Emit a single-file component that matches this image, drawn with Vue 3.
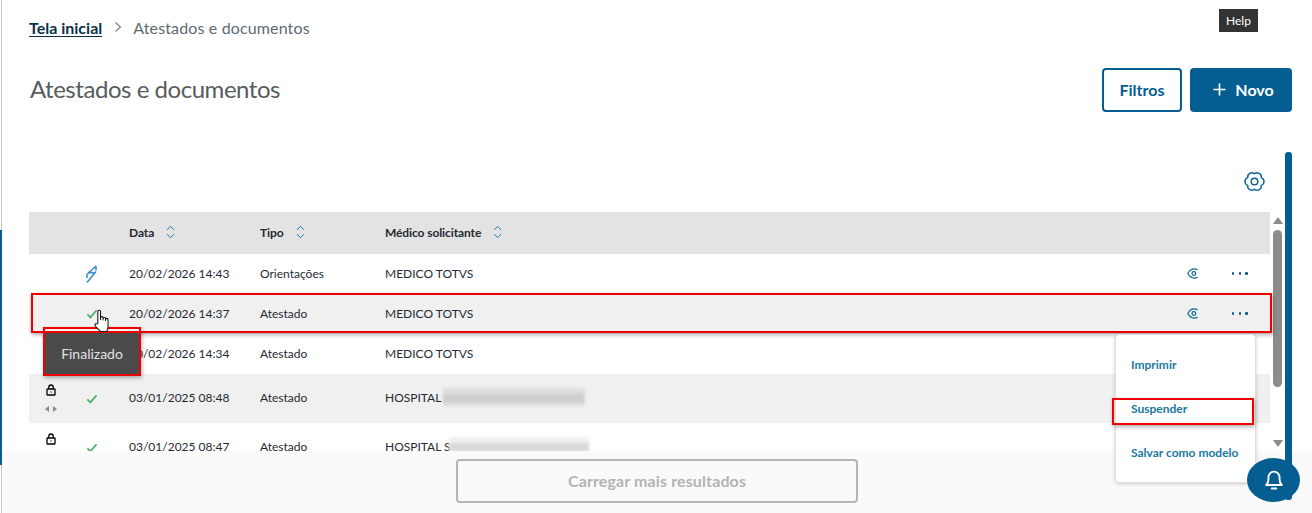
<script setup>
const rows = [
  { status: 'progress', date: '20/02/2026 14:43', type: 'Orientações', doctor: 'MEDICO TOTVS', eye: true, more: true, cls: '' },
  { status: 'done', date: '20/02/2026 14:37', type: 'Atestado', doctor: 'MEDICO TOTVS', eye: true, more: true, cls: 'alt' },
  { status: '', date: '20/02/2026 14:34', type: 'Atestado', doctor: 'MEDICO TOTVS', cls: '' },
  { status: 'done', date: '03/01/2025 08:48', type: 'Atestado', doctor: 'HOSPITAL', lock: true, arrows: true, blur: 'b1', cls: 'alt tall' },
  { status: 'done', date: '03/01/2025 08:47', type: 'Atestado', doctor: 'HOSPITAL S', lock: true, blur: 'b2', cls: 'tall' }
]
const heads = ['Data', 'Tipo', 'Médico solicitante']
</script>

<template>
  <div class="page">
    <div class="rail"></div>
    <nav class="crumbs">
      <a class="crumb-link">Tela inicial</a>
      <svg class="crumb-sep" viewBox="0 0 8 12" width="8" height="12"><path d="M1.5 1.5 6.5 6l-5 4.5" fill="none" stroke="#7a7a7a" stroke-width="1.1"/></svg>
      <span class="crumb-now">Atestados e documentos</span>
    </nav>
    <header class="head">
      <h1>Atestados e documentos</h1>
      <div class="actions">
        <button class="btn outline">Filtros</button>
        <button class="btn solid">
          <svg viewBox="0 0 14 14" width="13" height="13"><path d="M7 0.5v13M0.5 7h13" stroke="#fff" stroke-width="1.8"/></svg>
          Novo
        </button>
      </div>
    </header>
    <div class="gear-row">
      <svg class="gear" viewBox="0 0 24 24" width="25" height="25" fill="none" stroke="#0b6496" stroke-width="1.4" stroke-linejoin="round">
        <path d="M12 4.5A4 4 0 0 1 18.5 8.25 4 4 0 0 1 18.5 15.75 4 4 0 0 1 12 19.5 4 4 0 0 1 5.5 15.75 4 4 0 0 1 5.500 8.250 4 4 0 0 1 12 4.500Z"/>
        <circle cx="12" cy="12" r="3.2"/>
      </svg>
    </div>
    <div class="table">
      <div class="row thead">
        <span></span><span></span>
        <span v-for="h in heads" :key="h" class="th">
          {{ h }}
          <svg viewBox="0 0 10 16" width="9" height="14" fill="none" stroke="#1b6f9c" stroke-width="1.1"><path d="M1 5.5 5 1.5l4 4M1 10.5l4 4 4-4"/></svg>
        </span>
        <span></span><span></span>
      </div>
      <div v-for="r in rows" :key="r.date" class="row" :class="r.cls">
        <span class="lockcell">
          <svg v-if="r.lock" viewBox="0 0 10 12" width="10" height="12" fill="none" stroke="#000" stroke-width="1.3"><path d="M2.800 5V3.200a2.200 2.200 0 0 1 4.400 0V5"/><rect x="1" y="5" width="8" height="6" rx=".6"/><path d="M5 7.500v1"/></svg>
          <svg v-if="r.arrows" class="arrows" viewBox="0 0 12 6" width="12" height="6" fill="#8a8a8a"><path d="M4 0v6L0 3zM8 0v6l4-3z"/></svg>
        </span>
        <span class="status">
          <svg v-if="r.status === 'done'" viewBox="0 0 14 12" width="12" height="10" fill="none" stroke="#4fae6a" stroke-width="2.200"><path d="M1.500 6.500 5 10 12.500 1.500"/></svg>
          <svg v-else-if="r.status === 'progress'" viewBox="0 0 11 18" width="11" height="18" fill="none" stroke="#3a8fd0" stroke-width="1.600" stroke-linejoin="bevel"><path d="M10 1 1 9.500V13M10 1v4.500M10 6.500 1 17.500M2 7.500l7.500 .2"/></svg>
        </span>
        <span>{{ r.date }}</span>
        <span>{{ r.type }}</span>
        <span class="doctor">{{ r.doctor }}<i v-if="r.blur" class="smudge" :class="r.blur"></i></span>
        <span class="eye">
          <svg v-if="r.eye" viewBox="0 0 14 12" width="12" height="11" fill="none" stroke="#0b6496" stroke-width="1.400"><path d="M12.500 1.700C8 -.2 3.500 1.200 1 6c2.500 4.800 7 6.200 11.500 4.300"/><circle cx="8" cy="6" r="2.200"/></svg>
        </span>
        <span class="more"><template v-if="r.more"><b></b><b></b><b></b></template></span>
      </div>
    </div>
    <footer class="foot">
      <button class="load" disabled>Carregar mais resultados</button>
    </footer>

    <div class="vscroll"></div>
    <div class="tscroll">
      <i class="up"></i><i class="thumb"></i><i class="down"></i>
    </div>

    <div class="help">Help</div>
    <div class="mark mark-row"></div>
    <div class="tip">Finalizado</div>
    <div class="mark mark-tip"></div>
    <svg class="hand" viewBox="0 0 16 24" width="18" height="25" fill="#fff" stroke="#111" stroke-width="1" stroke-linejoin="round">
      <path d="M4 14V2.500a1.300 1.300 0 0 1 2.600 0V10V8.500a1.200 1.200 0 0 1 2.400 0V10.500V9.300a1.200 1.200 0 0 1 2.400 0V11V10.200a1.200 1.200 0 0 1 2.400 0V17c0 2-.6 3-1.200 4.500H6.500L2 17c-1.300-1.500-.8-3 .5-2.700z"/>
    </svg>
    <div class="menu">
      <a>Imprimir</a>
      <a>Suspender</a>
      <a>Salvar como modelo</a>
    </div>
    <div class="mark mark-menu"></div>
    <div class="bell">
      <svg viewBox="0 0 16 18" width="18" height="20" fill="none" stroke="#fff" stroke-width="1.700" stroke-linejoin="round"><path d="M1 13.500c1.500-1.500 2-2.500 2-5V6.500a5 5 0 0 1 10 0v2c0 2.500.5 3.500 2 5z"/><path d="M6 16.700h4" stroke-linecap="round"/></svg>
    </div>
  </div>
</template>

<style scoped>
.page {
  position: relative;
  width: 1312px;
  height: 513px;
  overflow: hidden;
  background: #fff;
  font-family: "Lato", "Open Sans", sans-serif;
  color: #1f2a33;
}
.rail {
  position: absolute;
  left: 0;
  top: 0;
  bottom: 0;
  width: 2px;
  z-index: 1;
  background: linear-gradient(to right, transparent 1px, #c9c9c9 1px) 0 0 / 2px 100% no-repeat;
}
.rail::after {
  content: "";
  position: absolute;
  left: 0;
  top: 230px;
  height: 235px;
  width: 2px;
  background: #05608f;
}
.crumbs {
  display: flex;
  align-items: center;
  height: 20px;
  padding: 17px 0 2px 29px;
  font-size: 16px;
}
.crumb-link {
  font-weight: 700;
  color: #0b3149;
  text-decoration: underline;
  text-underline-offset: 2px;
}
.crumb-sep { margin: 0 11px 0 12px; }
.crumb-now { color: #5e6a72; letter-spacing: .14px; }
.head {
  display: flex;
  justify-content: space-between;
  align-items: center;
  height: 44px;
  margin-top: 29px;
  padding: 0 20px 0 29px;
}
h1 {
  margin: 0 0 4px 1px;
  font-size: 24px;
  font-weight: 400;
  letter-spacing: -.46px;
  color: #565c60;
}
.actions { display: flex; gap: 8px; }
.btn {
  height: 44px;
  border-radius: 4px;
  font: 700 16px "Lato", sans-serif;
  display: flex;
  align-items: center;
  justify-content: center;
  box-sizing: border-box;
  padding-bottom: 2px;
}
.outline {
  width: 80px;
  background: #fff;
  border: 2px solid #055e92;
  color: #055e92;
}
.solid {
  width: 102px;
  gap: 9px;
  padding-left: 11px;
  background: #055e92;
  border: 0;
  color: #fff;
}
.gear-row {
  display: flex;
  justify-content: flex-end;
  height: 25px;
  margin-top: 57px;
  padding-right: 45px;
}
.table {
  width: 1241px;
  height: 239px;
  margin: 18px 0 0 29px;
  overflow: hidden;
  font-size: 12px;
}
.row {
  display: grid;
  grid-template-columns: 40px 60px 131px 125px 1fr 60px 56px;
  align-items: center;
  box-sizing: border-box;
  height: 40px;
  padding-bottom: 2px;
  color: #1f2a33;
}
.row.alt { background: #f0f0f0; }
.row.tall { height: 49px; }
.thead {
  height: 42px;
  background: #e3e3e3;
  font-weight: 700;
}
.th { display: flex; align-items: center; gap: 12px; letter-spacing: -.1px; }
.lockcell {
  display: flex;
  flex-direction: column;
  align-items: center;
  gap: 10px;
  justify-content: flex-start;
  align-self: stretch;
  padding: 10px 0 0 4px;
}
.status { display: flex; justify-content: center; padding-right: 15px; padding-top: 2px; }
.doctor { position: relative; }
.smudge {
  position: absolute;
  display: block;
  top: -2px;
  height: 18px;
  filter: blur(1.5px);
}
.b1 {
  left: 58px;
  width: 142px;
  background: linear-gradient(transparent 25%, #cfcfcf 40% 75%, transparent 90%), #dedede;
}
.b2 {
  left: 64px;
  width: 140px;
  background: linear-gradient(transparent 25%, #dadada 40% 75%, transparent 90%), #f0f0f0;
}
.eye { display: flex; justify-content: flex-end; padding-right: 15px; padding-top: 1px; }
.more { display: flex; gap: 4.500px; padding-left: 18px; padding-top: 1px; }
.more b {
  width: 2.200px;
  height: 2.200px;
  border-radius: 50%;
  background: #0b5d8c;
}
.foot {
  position: absolute;
  left: 2px;
  right: 0;
  top: 451px;
  bottom: 0;
  background: #fafafa;
  display: flex;
  justify-content: center;
  padding: 8px 0 0 0;
  box-sizing: border-box;
}
.load {
  width: 402px;
  height: 44px;
  padding-bottom: 2px;
  background: transparent;
  border: 2px solid #b5b5b5;
  border-radius: 4px;
  font: 700 16px "Lato", sans-serif;
  letter-spacing: .12px;
  color: #b3b3b3;
}
.vscroll {
  position: absolute;
  left: 1285px;
  top: 152px;
  width: 7px;
  height: 348px;
  background: #055e92;
  border-radius: 3px;
}
.tscroll { position: absolute; left: 1273px; top: 215px; width: 10px; height: 235px; }
.tscroll i { position: absolute; display: block; }
.up, .down {
  left: 0;
  width: 0;
  height: 0;
  border-left: 5px solid transparent;
  border-right: 5px solid transparent;
}
.up { top: 2px; border-bottom: 7px solid #8c8c8c; }
.down { top: 225px; border-top: 7px solid #8c8c8c; }
.thumb {
  left: 0;
  top: 15px;
  width: 9px;
  height: 157px;
  border-radius: 5px;
  background: #8c8c8c;
}
.help {
  position: absolute;
  left: 1219px;
  top: 9px;
  width: 39px;
  height: 23px;
  background: #333;
  color: #fff;
  font: 12px/23px "Lato", sans-serif;
  text-align: center;
}
.mark {
  position: absolute;
  box-sizing: border-box;
  border: 2px solid #f00000;
  box-shadow: 1px 2px 4px rgba(0, 0, 0, .3);
}
.mark-row { left: 31px; top: 293px; width: 1241px; height: 40px; }
.mark-tip { left: 43px; top: 327px; width: 98px; height: 49px; }
.mark-menu { left: 1112px; top: 398px; width: 142px; height: 27px; }
.tip {
  position: absolute;
  left: 45px;
  top: 333px;
  width: 94px;
  height: 42px;
  background: #4a4a4a;
  color: #e2e2e2;
  font-size: 14px;
  line-height: 42px;
  text-align: center;
}
.hand { position: absolute; left: 93px; top: 309px; }
.menu {
  position: absolute;
  left: 1115px;
  top: 334px;
  width: 141px;
  height: 149px;
  box-sizing: border-box;
  display: flex;
  flex-direction: column;
  justify-content: center;
  background: #fff;
  border: 1px solid #dedede;
  border-radius: 4px;
  box-shadow: 0 1px 4px rgba(0, 0, 0, .18);
  font-size: 12px;
  font-weight: 700;
  color: #1a789f;
}
.menu a { display: block; height: 44px; line-height: 44px; padding-left: 15px; }
.bell {
  position: absolute;
  left: 1247px;
  top: 458px;
  width: 53px;
  height: 44px;
  border-radius: 50%;
  background: #055e92;
  display: flex;
  align-items: center;
  justify-content: center;
}
</style>
